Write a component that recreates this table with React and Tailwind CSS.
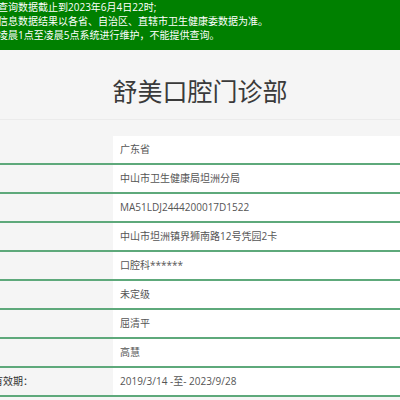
import React from 'react';

const rows = [
  { label: '', value: '广东省' },
  { label: '', value: '中山市卫生健康局坦洲分局' },
  { label: '', value: 'MA51LDJ2444200017D1522' },
  { label: '', value: '中山市坦洲镇界狮南路12号凭园2卡' },
  { label: '', value: '口腔科******' },
  { label: '', value: '未定级' },
  { label: '', value: '屈清平' },
  { label: '', value: '高慧' },
  { label: '有效期：', value: '2019/3/14 -至- 2023/9/28' },
];

const App = () => {
  return (
    <div
      className="w-[400px] h-[400px] overflow-hidden bg-[#f5f5f5]"
      style={{ fontFamily: '"Open Sans", "Noto Sans CJK SC", sans-serif' }}
    >
      {/* notice banner */}
      <div className="h-[50px] bg-[#008000] text-white text-[10px] leading-[14px] -ml-[2px] whitespace-nowrap">
        <p>查询数据截止到2023年6月4日22时;</p>
        <p>信息数据结果以各省、自治区、直辖市卫生健康委数据为准。</p>
        <p>凌晨1点至凌晨5点系统进行维护，不能提供查询。</p>
      </div>

      {/* title */}
      <div className="h-[70px] flex items-center justify-center pt-[14px] border-b border-[#ebebeb]">
        <h1 className="text-[25px] text-[#3a3a3a]">舒美口腔门诊部</h1>
      </div>

      {/* info table */}
      <div className="mt-[16px]">
        {rows.map((row, i) => (
          <div key={i} className="flex h-[29px] border-b-2 border-[#5ea97b]">
            <div className="w-[113px] shrink-0 bg-[#f5f5f5] flex items-center overflow-hidden">
              <span className="-ml-[7px] text-[10px] text-[#333] whitespace-nowrap">{row.label}</span>
            </div>
            <div className="flex-1 bg-white flex items-center pl-[7px] text-[10px] text-[#555] whitespace-nowrap">
              {row.value}
            </div>
          </div>
        ))}
      </div>
    </div>
  );
};

export default App;
